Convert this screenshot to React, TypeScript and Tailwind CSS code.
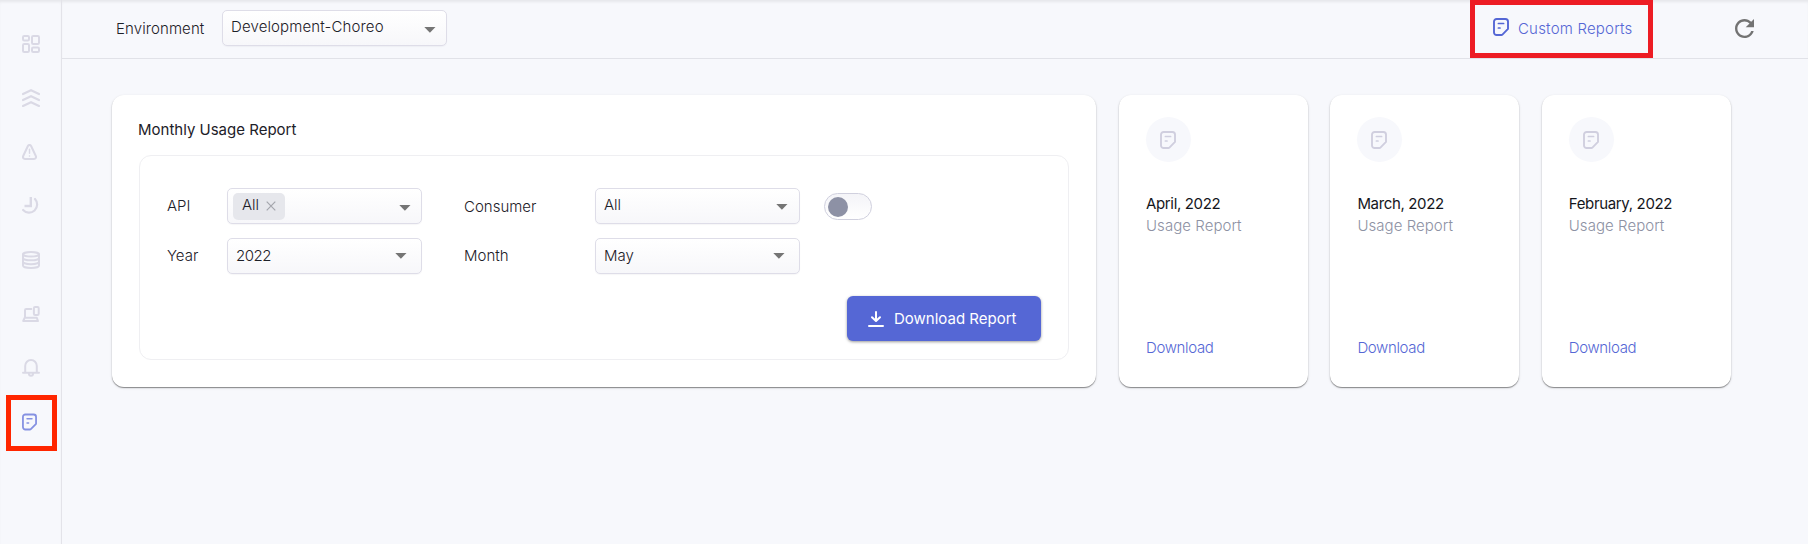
import type { ReactNode } from "react";

function ReportIcon({ className }: { className: string }) {
  return (
    <svg viewBox="0 0 16 18" className={`block ${className}`} fill="none" stroke="currentColor" strokeWidth="1.9" strokeLinecap="round" strokeLinejoin="round">
      <path d="M3.6 1h8.800A2.600 2.600 0 0 1 15 3.600v7.300L9.400 16.600c-.3.300-.6.400-1 .4H3.600A2.600 2.600 0 0 1 1 14.400V3.600A2.600 2.600 0 0 1 3.600 1z" />
      <path strokeWidth="1.700" d="M5.400 5.500h5.200M5.400 10h1.600" />
    </svg>
  );
}

function Glyph({ h, vb, children }: { h: string; vb: string; children: ReactNode }) {
  return (
    <svg viewBox={vb} className={`block w-[18px] ${h}`} fill="none" stroke="currentColor" strokeWidth="2" strokeLinecap="round" strokeLinejoin="round">
      {children}
    </svg>
  );
}

const navIcons: { id: string; icon: ReactNode }[] = [
  {
    id: "overview",
    icon: (
      <Glyph h="h-[18px]" vb="0 0 18 18">
        <rect x="1" y="1" width="6" height="4.400" rx="1.200" />
        <rect x="10" y="1" width="7" height="8" rx="1.200" />
        <rect x="1" y="9" width="6" height="8" rx="1.200" />
        <rect x="10" y="12.600" width="7" height="4.400" rx="1.200" />
      </Glyph>
    ),
  },
  {
    id: "traffic",
    icon: (
      <Glyph h="h-[18px]" vb="0 0 18 18">
        <path strokeWidth="2.200" d="M1 5l8-3.800L17 5M1 11l8-3.800 8 3.800M1 17l8-3.800 8 3.800" />
      </Glyph>
    ),
  },
  {
    id: "errors",
    icon: (
      <Glyph h="h-[16px]" vb="0 0 18 16">
        <path d="M5.900 2c.7-1.400 2.500-1.400 3.200 0l4.700 10c.7 1.500-.1 3-1.800 3H3c-1.700 0-2.500-1.500-1.800-3z" />
        <path strokeWidth="1.500" d="M7.500 5.300v4M7.500 12v.1" />
      </Glyph>
    ),
  },
  {
    id: "latency",
    icon: (
      <Glyph h="h-[19px]" vb="0 0 18 19">
        <path strokeWidth="2.200" d="M13 2A8.100 8.100 0 1 1 1.100 13" />
        <path strokeWidth="2.400" strokeLinecap="butt" strokeLinejoin="miter" d="M8.800 0v9H2.500" />
      </Glyph>
    ),
  },
  {
    id: "cache",
    icon: (
      <Glyph h="h-[18px]" vb="0 0 18 18">
        <ellipse cx="9" cy="3.300" rx="8" ry="2.300" />
        <path d="M1 3.300v11.200C1 16 4.600 17 9 17s8-1 8-2.500V3.300M1 6.900c0 1.400 3.600 2.400 8 2.400s8-1 8-2.400M1 10.800c0 1.400 3.600 2.400 8 2.400s8-1 8-2.400" />
      </Glyph>
    ),
  },
  {
    id: "devices",
    icon: (
      <Glyph h="h-[16px]" vb="0 0 18 16">
        <path d="M9.300 3H4.200C3.500 3 3 3.500 3 4.200V11" />
        <rect x="11.900" y="1" width="4.800" height="8" rx="1.200" />
        <path d="M2.600 11.800h12.200L16 15H1.200z" />
      </Glyph>
    ),
  },
  {
    id: "alerts",
    icon: (
      <Glyph h="h-[18px]" vb="0 0 18 18">
        <path d="M1 13.800h16M3.200 13.600V6.900a5.800 5.900 0 0 1 11.600 0v6.700" />
        <path d="M6.900 14.200a2.100 2.600 0 0 0 4.200 0" />
      </Glyph>
    ),
  },
];

function Caret({ className = "" }: { className?: string }) {
  return (
    <svg viewBox="0 0 12 6" className={`block h-[6px] w-[12px] shrink-0 ${className}`} fill="#757575">
      <path d="M0.300 0h11.200L5.900 5.800z" />
    </svg>
  );
}

const box = "flex items-start rounded-[5px] border border-[#dedde8] bg-linear-to-b from-white to-[#f7f7fa] shadow-[0_1px_1px_rgba(50,50,77,0.04)]";

function Select({ className, text, caret }: { className: string; text: string; caret: string }) {
  return (
    <div className={`${box} h-9 justify-between ${className}`}>
      <span>{text}</span>
      <Caret className={caret} />
    </div>
  );
}

const reports = ["April, 2022", "March, 2022", "February, 2022"];

const cardShadow = "rounded-[12px] bg-white shadow-[0_1px_1px_rgba(0,0,0,0.4),0_1px_3px_rgba(0,0,0,0.12)]";

export default function App() {
  return (
    <div className="flex h-[544px] w-[1808px] overflow-hidden bg-[#f7f8fc] font-['Inter',sans-serif] text-[15px] leading-[20px] font-light text-[#1d2028]">
      <nav className="flex w-[62px] shrink-0 flex-col border-r border-[#e3e3e9] bg-[#f7f8fc] pt-[17px] text-[#dad9e5] shadow-[inset_0_3px_3px_-1px_rgba(0,0,0,0.07)]">
        {navIcons.map((n) => (
          <a key={n.id} className="flex h-[54px] items-center pl-[22px]">
            {n.icon}
          </a>
        ))}
        <a className="ml-[6px] flex h-[56px] w-[51px] items-center border-[5px] border-[#ff2600] pl-[11px] text-[#8591e2]">
          <ReportIcon className="h-[18px] w-[15px] -translate-y-px" />
        </a>
      </nav>

      <div className="flex grow flex-col">
        <header className="flex h-[59px] shrink-0 items-start border-b border-[#e1e2e8] pl-[53px] shadow-[inset_0_3px_3px_-1px_rgba(0,0,0,0.07)]">
          <span className="w-[107px] pt-[19px] pl-px tracking-[0.1px]">Environment</span>
          <Select className="mt-[10px] w-[225px] pt-[6px] pr-[10px] pl-[8px] tracking-[0.13px]" text="Development-Choreo" caret="mt-[10px]" />
          <button className="ml-[1023px] flex h-[58px] w-[183px] items-start border-[5px] border-[#ed1c24] pl-[18px] text-[#5567d5]">
            <ReportIcon className="mt-[13px] h-[18px] w-[16px]" />
            <span className="mt-[14px] ml-[9px] tracking-[0.2px] whitespace-nowrap">Custom Reports</span>
          </button>
          <svg viewBox="4 4 16 16" className="mt-[19px] ml-[82px] block size-[19px]" fill="#737373">
            <path d="M17.650 6.350C16.200 4.900 14.210 4 12 4c-4.420 0-7.990 3.580-7.990 8s3.570 8 7.990 8c3.730 0 6.840-2.550 7.730-6h-2.080c-.82 2.330-3.040 4-5.650 4-3.310 0-6-2.690-6-6s2.690-6 6-6c1.660 0 3.140.69 4.220 1.780L13 11h7V4l-2.350 2.350z" />
          </svg>
        </header>

        <main className="flex items-start pt-[36px] pl-[50px]">
          <section className={`h-[292px] w-[984px] px-[27px] pt-[25px] ${cardShadow}`}>
            <h2 className="-ml-px h-[35px] font-normal text-[#1d2028]">Monthly Usage Report</h2>
            <div className="h-[205px] w-[930px] rounded-[12px] border border-[#efeff2] pt-[32px] pl-[27px]">
              <div className="flex h-[50px] items-start">
                <span className="w-[60px] pt-[8px]">API</span>
                <div className={`${box} h-9 w-[195px] justify-between pr-[10px] pl-[5px]`}>
                  <span className="mt-[4px] flex h-[27px] w-[52px] items-start rounded-[5px] bg-[#e6e7ec] pt-[2px] pl-[9px]">
                    All
                    <svg viewBox="0 0 10 10" className="mt-[6px] ml-[7px] size-[10px]" stroke="#a4a5ac" strokeWidth="1.200" fill="none">
                      <path d="M0.700 0.700l8.600 8.600M9.300 0.700L0.700 9.300" />
                    </svg>
                  </span>
                  <Caret className="mt-[16px]" />
                </div>
                <span className="ml-[42px] w-[131px] pt-[9px]">Consumer</span>
                <Select className="w-[205px] pt-[6px] pr-[11px] pl-[8px]" text="All" caret="mt-[9px]" />
                <span className="mt-[5px] ml-[24px] flex h-[27px] w-[48px] items-center rounded-full border border-[#d0d0de] bg-linear-to-b from-[#f4f4f8] to-white pl-[3px]">
                  <span className="size-[20px] rounded-full bg-[#8d91a5]" />
                </span>
              </div>
              <div className="flex h-[58px] items-start">
                <span className="w-[60px] pt-[8px]">Year</span>
                <Select className="w-[195px] pt-[7px] pr-[14px] pl-[8px] tracking-[-0.5px]" text="2022" caret="mt-[7px]" />
                <span className="ml-[42px] w-[131px] pt-[8px]">Month</span>
                <Select className="w-[205px] pt-[7px] pr-[14px] pl-[8px]" text="May" caret="mt-[7px]" />
              </div>
              <div className="flex justify-end pr-[27px]">
                <button className="flex h-[45px] w-[194px] items-start rounded-[6px] bg-[#5567d5] pl-[21px] font-normal text-white shadow-[0_1px_3px_rgba(0,0,0,0.4)]">
                  <svg viewBox="0 0 16 16" className="mt-[15px] size-[16px]" stroke="white" strokeWidth="2" fill="none" strokeLinecap="round" strokeLinejoin="round">
                    <path d="M8 1v8.500M4 6.200L8 10l4-3.800M1 15h14" />
                  </svg>
                  <span className="mt-[13px] ml-[10px] whitespace-nowrap">Download Report</span>
                </button>
              </div>
            </div>
          </section>

          <div className="ml-[23px] flex gap-[22.400px]">
            {reports.map((r) => (
              <article key={r} className={`flex h-[292px] w-[189px] flex-col items-start pt-[22px] pl-[27px] ${cardShadow}`}>
                <span className="flex size-[45px] items-center rounded-full bg-[#f7f8fc] pl-[14px] text-[#d0cfdf]">
                  <ReportIcon className="h-[18px] w-[16px]" />
                </span>
                <h3 className="mt-[32px] h-[22px] font-normal tracking-[-0.350px] whitespace-nowrap text-[#14161c]">{r}</h3>
                <p className="tracking-[0.050px] text-[#8d91a3]">Usage Report</p>
                <a className="mt-[102px] tracking-[-0.350px] text-[#5567d5]">Download</a>
              </article>
            ))}
          </div>
        </main>
      </div>
    </div>
  );
}
